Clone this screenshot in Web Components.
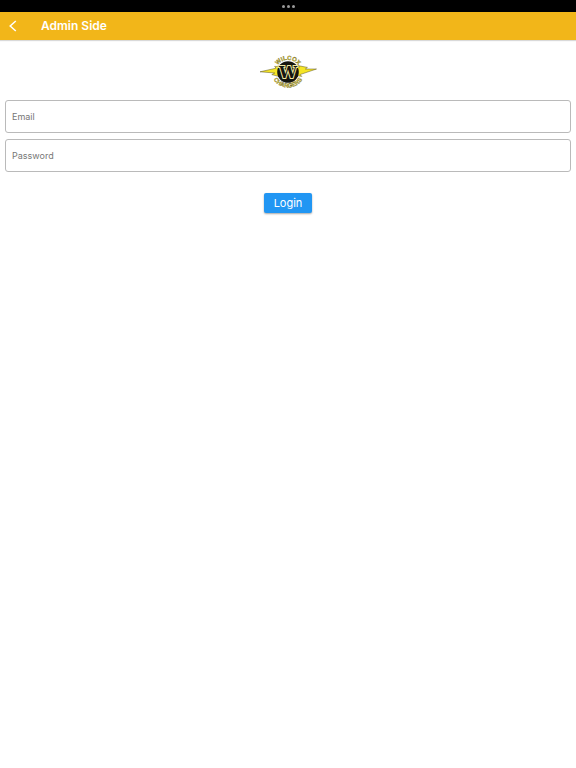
<!DOCTYPE html>
<html lang="en">
<head>
<meta charset="utf-8">
<meta name="viewport" content="width=device-width, initial-scale=1">
<title>Admin Side</title>
<style>
    body {
        margin: 0;
        background-color: #fff;
        font-family: Inter, "Liberation Sans", sans-serif;
    }
</style>
</head>
<body>
<admin-login>
    <status-bar slot="top"></status-bar>
    <app-header slot="top">Admin Side</app-header>
    <team-logo></team-logo>
    <text-field label="Email" type="email"></text-field>
    <text-field label="Password" type="password"></text-field>
    <login-button>Login</login-button>
</admin-login>

<script>
class StatusBar extends HTMLElement {
    constructor(){
        super()
        this.attachShadow({mode : "open"}).innerHTML = `
        <style>
            :host {
                display: flex;
                justify-content: center;
                align-items: center;
                gap: 2px;
                height: 12px;
                background-color: #000;
            }

            span {
                width: 3px;
                height: 3px;
                border-radius: 50%;
                background-color: #999;
            }
        </style>
        <span></span><span></span><span></span>
        `
    }
}

class AppHeader extends HTMLElement {
    constructor(){
        super()
        this.attachShadow({mode : "open"}).innerHTML = `
        <style>
            :host {
                display: flex;
                align-items: center;
                gap: 20px;
                height: 28px;
                padding: 0 5px;
                background-color: #f2b619;
                box-shadow: 0 1px 1px rgba(0, 0, 0, 0.15);
                color: #fff;
            }

            button {
                display: flex;
                justify-content: center;
                padding: 0;
                width: 16px;
                border: none;
                background-color: transparent;
                color: inherit;
                cursor: pointer;
            }

            h1 {
                margin: 0;
                font-size: 12px;
                line-height: 16px;
                font-weight: 600;
            }
        </style>
        <button type="button" aria-label="Back">
            <svg width="8" height="12" viewBox="0 0 8 12" fill="none" stroke="currentColor" stroke-width="1.5">
                <path d="M6.8 1 1.2 6l5.6 5"/>
            </svg>
        </button>
        <h1><slot></slot></h1>
        `
    }
}

class TeamLogo extends HTMLElement {
    constructor(){
        super()
        this.attachShadow({mode : "open"}).innerHTML = `
        <style>
            :host {
                display: flex;
                justify-content: center;
            }

            text {
                font-family: "DejaVu Serif", serif;
                font-weight: bold;
                text-anchor: middle;
            }

            .ring {
                font-family: "Liberation Sans", sans-serif;
                font-size: 6px;
                fill: #d8c62a;
                stroke: #6b6430;
                stroke-width: .3;
            }
        </style>
        <svg width="64" height="42" viewBox="0 0 64 42" role="img" aria-label="Wilcox Chargers">
            <defs>
                <path id="upper" d="M19.8 22a12.2 12.2 0 0 1 24.4 0"/>
                <path id="lower" d="M15.7 22a16.3 15.6 0 0 0 32.6 0"/>
            </defs>
            <path d="M4 21.8 20 18.2l-1.4-1.8 25 .6-1.6-1.4 9.4 1.8-2 1.6L60.5 19 44 24.6l1.8 1.8-8-1.4-12 .2 1.4 2.4-11.4-3 3-1.6z"
                fill="#f5e526" stroke="#5a531c" stroke-width=".5" stroke-linejoin="round"/>
            <circle cx="32" cy="22" r="10.8" fill="#15150f"/>
            <text x="32" y="28" font-size="16" fill="#15150f" stroke="#f0e9a0" stroke-width="2" paint-order="stroke">W</text>
            <text class="ring"><textPath href="#upper" startOffset="50%">WILCOX</textPath></text>
            <text class="ring"><textPath href="#lower" startOffset="50%">CHARGERS</textPath></text>
        </svg>
        `
    }
}

class TextField extends HTMLElement {
    constructor(){
        super()
        this.attachShadow({mode : "open"})
    }

    connectedCallback() {
        this.render()
    }

    render(){
        const label = this.getAttribute("label")
        this.shadowRoot.innerHTML = `
        <style>
            :host {
                display: block;
            }

            input {
                display: block;
                box-sizing: border-box;
                width: 100%;
                height: 33px;
                padding: 0 6px;
                border: 1px solid #bababa;
                border-radius: 3px;
                background-color: #fff;
                color: #222;
                font-family: inherit;
                font-size: 9px;
            }

            input::placeholder {
                color: #777;
                opacity: 1;
            }
        </style>
        <input type="${this.getAttribute("type")}" placeholder="${label}" aria-label="${label}">
        `
    }
}

class LoginButton extends HTMLElement {
    constructor(){
        super()
        this.attachShadow({mode : "open"}).innerHTML = `
        <style>
            :host {
                display: flex;
                justify-content: center;
                margin-top: 15px;
            }

            button {
                padding: 0 10px;
                border: none;
                border-radius: 2px;
                background-color: #2196f3;
                box-shadow: 0 1px 2px rgba(0, 0, 0, 0.35);
                color: #fff;
                font-family: inherit;
                font-size: 11px;
                line-height: 20px;
                cursor: pointer;
            }
        </style>
        <button type="button"><slot></slot></button>
        `
    }
}

class AdminLogin extends HTMLElement {
    constructor(){
        super()
        this.attachShadow({mode : "open"}).innerHTML = `
        <style>
            :host {
                display: block;
            }

            main {
                display: flex;
                flex-direction: column;
                gap: 6px;
                padding: 10px 5px;
            }

            ::slotted(team-logo) {
                margin-bottom: 2px;
            }
        </style>
        <header><slot name="top"></slot></header>
        <main><slot></slot></main>
        `
    }
}

customElements.define("status-bar" , StatusBar)
customElements.define("app-header" , AppHeader)
customElements.define("team-logo" , TeamLogo)
customElements.define("text-field" , TextField)
customElements.define("login-button" , LoginButton)
customElements.define("admin-login" , AdminLogin)
</script>
</body>
</html>
